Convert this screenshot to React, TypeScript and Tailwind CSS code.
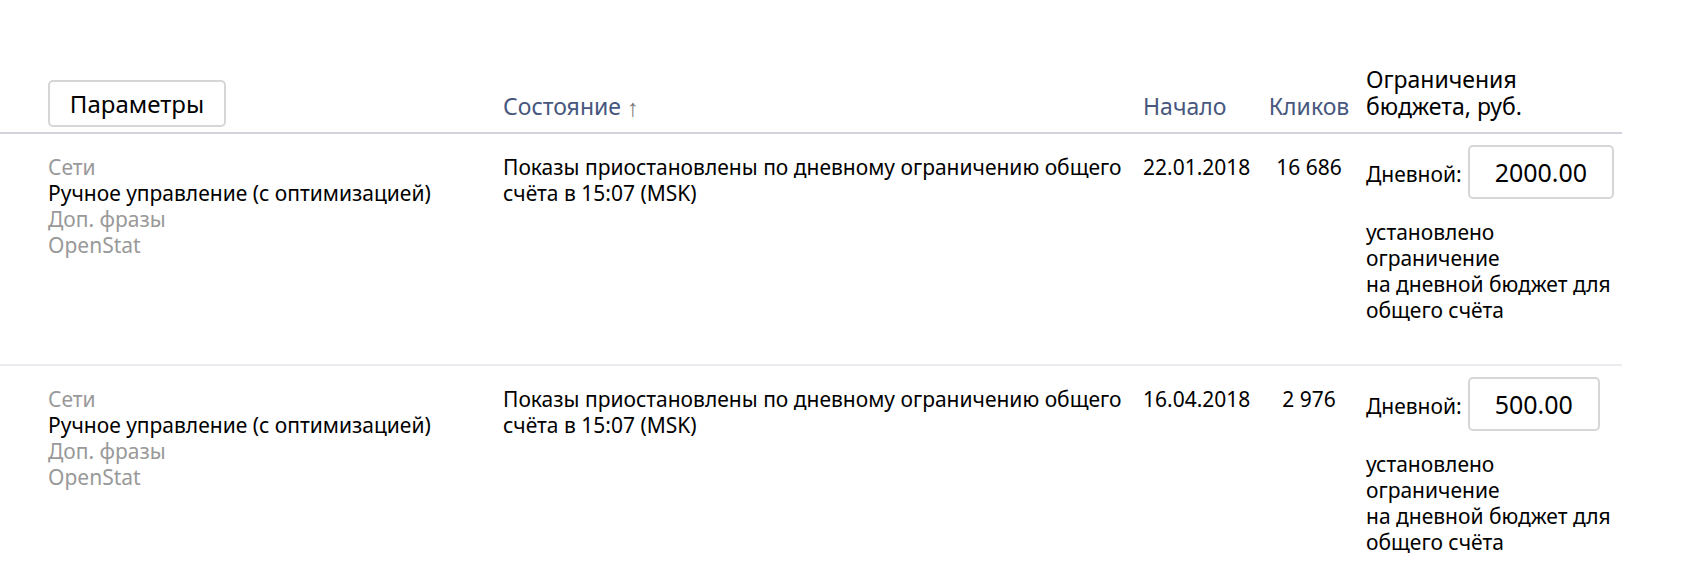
import React from "react";

const font = { fontFamily: '"Noto Sans", "Open Sans", Arial, sans-serif' };

type Row = {
  date: string;
  clicks: string;
  budget: string;
};

const rows: Row[] = [
  { date: "22.01.2018", clicks: "16 686", budget: "2000.00" },
  { date: "16.04.2018", clicks: "2 976", budget: "500.00" },
];

const cols = "grid grid-cols-[503px_640px_117px_98px_264px]";

function DataRow({ row, last }: { row: Row; last: boolean }) {
  return (
    <div
      className={`${cols} text-[21px] leading-[26px] text-[#000] ${
        last ? "" : "border-b-2 border-[#ebebf0] pb-[41px]"
      }`}
    >
      <div className="pl-[48px] pt-[20px]">
        <div className="text-[#999]">Сети</div>
        <div>Ручное управление (с оптимизацией)</div>
        <div className="text-[#999]">Доп. фразы</div>
        <div className="text-[#999]">OpenStat</div>
      </div>
      <div className="pt-[20px]">
        Показы приостановлены по дневному ограничению общего счёта в 15:07 (MSK)
      </div>
      <div className="pt-[20px]">{row.date}</div>
      <div className="pt-[20px] text-center">{row.clicks}</div>
      <div className="pt-[11px] pl-[8px]">
        <div className="flex items-center gap-[6px]">
          <span className="pt-[4px]">Дневной:</span>
          <div className="h-[54px] border-2 border-[#d6d6d6] rounded-[5px] px-[25px] flex items-center text-[25px]">
            {row.budget}
          </div>
        </div>
        <div className="mt-[20px]">
          <div>установлено</div>
          <div>ограничение</div>
          <div>на дневной бюджет для</div>
          <div>общего счёта</div>
        </div>
      </div>
    </div>
  );
}

export default function App() {
  return (
    <div className="w-[1682px] h-[566px] bg-white overflow-hidden" style={font}>
      <div className="w-[1622px]">
        <div
          className={`${cols} h-[134px] items-end border-b-2 border-[#d3d3dd] text-[23px] leading-[27px]`}
        >
          <div className="pl-[48px] pb-[5px]">
            <button className="h-[47px] w-[178px] border-2 border-[#d6d6d6] rounded-[5px] bg-white text-[24px] text-black flex items-center justify-center">
              Параметры
            </button>
          </div>
          <div className="pb-[12px] text-[#47577d] flex items-end gap-[6px]">
            <span>Состояние</span>
            <span className="text-[#777] text-[24px] leading-[27px]">↑</span>
          </div>
          <div className="pb-[12px] text-[#47577d]">Начало</div>
          <div className="pb-[12px] text-[#47577d] text-center">Кликов</div>
          <div className="pb-[12px] pl-[8px] text-black">
            <div>Ограничения</div>
            <div>бюджета, руб.</div>
          </div>
        </div>
        {rows.map((r, i) => (
          <DataRow key={i} row={r} last={i === rows.length - 1} />
        ))}
      </div>
    </div>
  );
}
